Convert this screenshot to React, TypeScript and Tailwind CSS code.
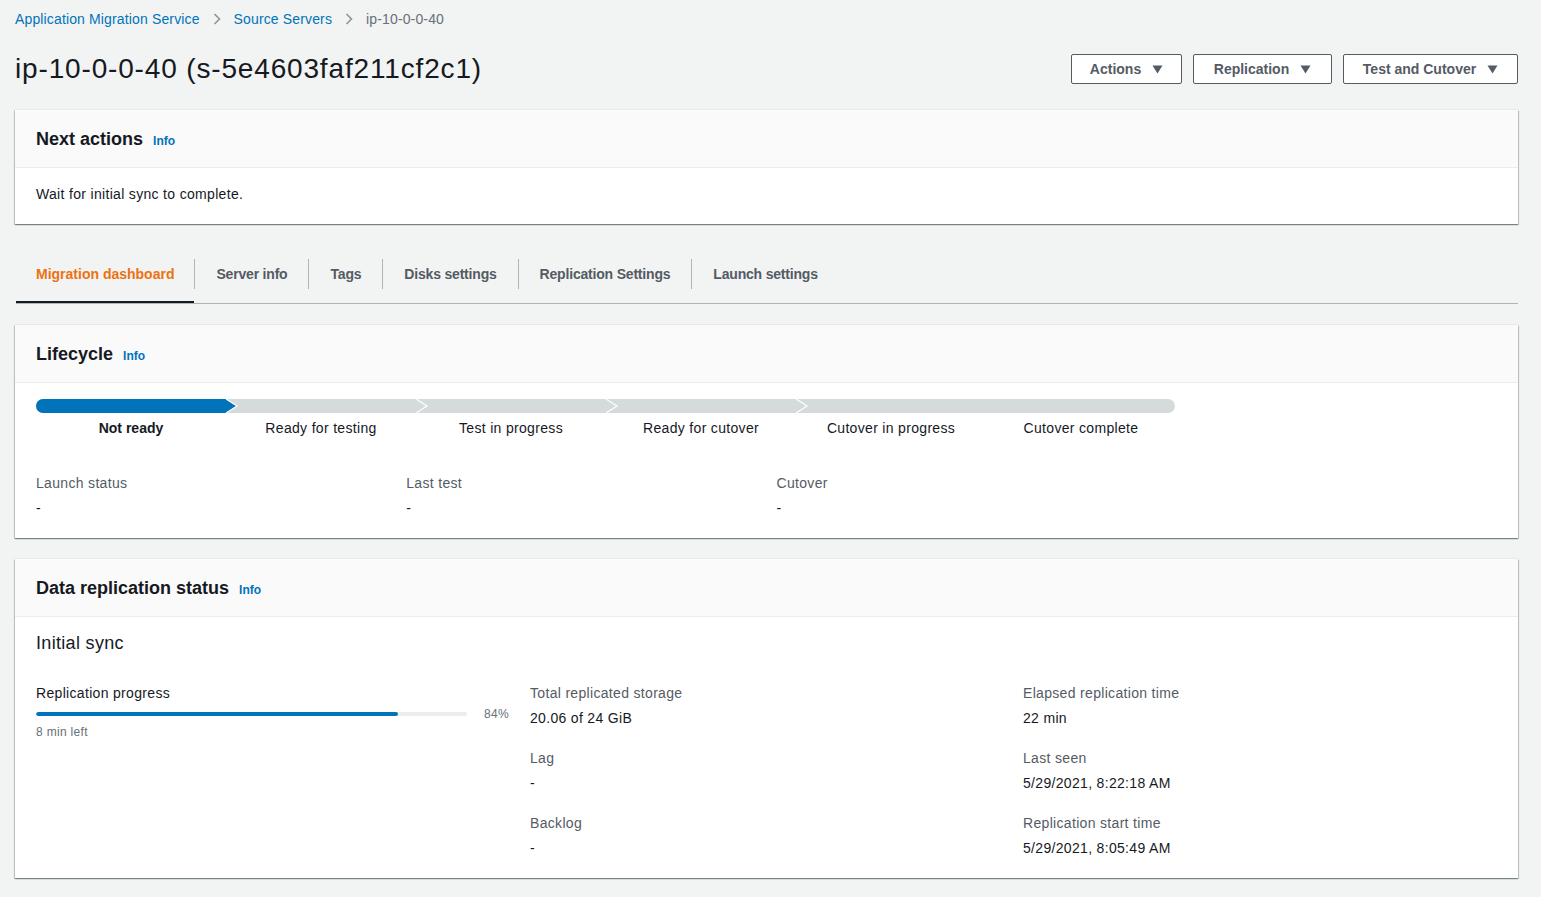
import React from "react";

const font = { fontFamily: "'Liberation Sans', Arial, sans-serif" };

function Caret() {
  return (
    <svg width="11" height="9" viewBox="0 0 11 9" className="ml-[11px]">
      <path d="M0.5 0.5 L10.5 0.5 L5.5 8.5 Z" fill="#545b64" />
    </svg>
  );
}

function Chevron() {
  return (
    <svg width="8" height="12" viewBox="0 0 8 12" className="mx-[13px]">
      <path d="M1.5 1 L6.5 6 L1.5 11" fill="none" stroke="#879596" strokeWidth="1.5" />
    </svg>
  );
}

function Btn({ label, w }: { label: string; w: string }) {
  return (
    <button className={`${w} h-[30px] flex items-center justify-center border border-[#545b64] rounded-[2px] bg-white text-[14px] font-bold tracking-normal text-[#545b64]`}>
      {label}
      <Caret />
    </button>
  );
}

function Card({ title, children }: { title: string; children: React.ReactNode }) {
  return (
    <div className="bg-white shadow-[0_0_0_0.5px_rgba(0,28,36,0.08),0_1px_1px_0_rgba(0,28,36,0.3),1px_1px_1px_0_rgba(0,28,36,0.15),-1px_1px_1px_0_rgba(0,28,36,0.15)]">
      <div className="h-[58px] bg-[#fafafa] border-b border-[#eaeded] flex items-center px-[21px] pt-[1px] tracking-normal">
        <span className="text-[18px] font-bold text-[#16191f]">{title}</span>
        <span className="ml-[10px] text-[12px] font-bold text-[#0073bb] mt-[4px]">Info</span>
      </div>
      {children}
    </div>
  );
}

function KV({ label, value }: { label: string; value: string }) {
  return (
    <div className="mb-[20px]">
      <div className="text-[14px] leading-[20px] text-[#545b64]">{label}</div>
      <div className="text-[14px] leading-[20px] text-[#16191f] mt-[5px]">{value}</div>
    </div>
  );
}

const steps = [
  "Not ready",
  "Ready for testing",
  "Test in progress",
  "Ready for cutover",
  "Cutover in progress",
  "Cutover complete",
];

function Stepper() {
  const seg = 190;
  const w = seg * 6;
  return (
    <div className="w-[1140px]">
      <svg width={w} height="14" viewBox={`0 0 ${w} 14`} className="block">
        <rect x="0" y="0" width={w - 1} height="14" rx="7" fill="#d5dbdb" />
        <path d={`M7 0 L${seg} 0 L${seg + 11} 7 L${seg} 14 L7 14 A7 7 0 0 1 7 0 Z`} fill="#0073bb" />
        {[2, 3, 4, 5].map((i) => (
          <path
            key={i}
            d={`M${seg * (i - 1) + 0} 0 L${seg * (i - 1) + 11} 7 L${seg * (i - 1)} 14`}
            fill="none"
            stroke="#ffffff"
            strokeWidth="1.2"
          />
        ))}
      </svg>
      <div className="flex mt-[5px]">
        {steps.map((s, i) => (
          <div
            key={s}
            className={`w-[190px] text-center text-[14px] leading-[20px] text-[#16191f] ${i === 0 ? "font-bold tracking-normal" : ""}`}
          >
            {s}
          </div>
        ))}
      </div>
    </div>
  );
}

const tabs = ["Migration dashboard", "Server info", "Tags", "Disks settings", "Replication Settings", "Launch settings"];

export default function App() {
  return (
    <div style={font} className="min-h-[897px] bg-[#f2f3f3] pl-[15px] pr-[23px] pt-[9px] pb-[20px] text-[#16191f] tracking-[0.02em]">
      {/* Breadcrumb */}
      <div className="flex items-center h-[20px] text-[14px] tracking-[0.01em]">
        <span className="text-[#0073bb]">Application Migration Service</span>
        <Chevron />
        <span className="text-[#0073bb]">Source Servers</span>
        <Chevron />
        <span className="text-[#687078]">ip-10-0-0-40</span>
      </div>

      {/* Title row */}
      <div className="flex items-center justify-between mt-[22px] h-[36px]">
        <h1 className="text-[28px] leading-[36px] font-normal text-[#16191f] tracking-[0.03em]">ip-10-0-0-40 (s-5e4603faf211cf2c1)</h1>
        <div className="flex gap-[11px]">
          <Btn label="Actions" w="w-[111px]" />
          <Btn label="Replication" w="w-[139px]" />
          <Btn label="Test and Cutover" w="w-[175px]" />
        </div>
      </div>

      {/* Next actions */}
      <div className="mt-[23px]">
        <Card title="Next actions">
          <div className="px-[21px] pt-[16px] pb-[20px] text-[14px] leading-[20px]">Wait for initial sync to complete.</div>
        </Card>
      </div>

      {/* Tabs */}
      <div className="mt-[35px] ml-[1px] flex items-start border-b border-[#aab7b8] tracking-[-0.012em]">
        {tabs.map((t, i) => (
          <React.Fragment key={t}>
            {i > 0 && <div className="w-px h-[30px] bg-[#aab7b8]" />}
            <div className={`flex flex-col ${i === 0 ? "px-[20px] tracking-normal" : "px-[21px]"} relative`}>
              <div
                className={`h-[30px] flex items-center text-[14px] font-bold ${i === 0 ? "text-[#ec7211]" : "text-[#545b64]"}`}
              >
                {t}
              </div>
              <div className="h-[14px]" />
              {i === 0 && <div className="absolute left-0 right-0 bottom-0 h-[2px] bg-[#16191f]" />}
            </div>
          </React.Fragment>
        ))}
      </div>

      {/* Lifecycle */}
      <div className="mt-[21px]">
        <Card title="Lifecycle">
          <div className="px-[21px] pt-[16px] pb-[20px]">
            <Stepper />
            <div className="grid grid-cols-4 mt-[35px] w-[1481px]">
              <div className="flex flex-col">
                <div className="text-[14px] leading-[20px] text-[#545b64]">Launch status</div>
                <div className="text-[14px] leading-[20px] mt-[5px]">-</div>
              </div>
              <div className="flex flex-col">
                <div className="text-[14px] leading-[20px] text-[#545b64]">Last test</div>
                <div className="text-[14px] leading-[20px] mt-[5px]">-</div>
              </div>
              <div className="flex flex-col">
                <div className="text-[14px] leading-[20px] text-[#545b64]">Cutover</div>
                <div className="text-[14px] leading-[20px] mt-[5px]">-</div>
              </div>
            </div>
          </div>
        </Card>
      </div>

      {/* Data replication status */}
      <div className="mt-[21px]">
        <Card title="Data replication status">
          <div className="pl-[21px] pt-[14px]">
            <div className="text-[18px] leading-[24px] text-[#16191f]">Initial sync</div>
            <div className="grid grid-cols-[494px_493px_1fr] mt-[28px]">
              <div className="pr-[20px]">
                <div className="text-[14px] leading-[20px] text-[#16191f]">Replication progress</div>
                <div className="flex items-center mt-[3px] h-[16px]">
                  <div className="w-[431px] h-[4px] bg-[#eaeded] rounded-[2px] overflow-hidden">
                    <div className="h-full bg-[#0073bb] rounded-[2px]" style={{ width: "84%" }} />
                  </div>
                  <span className="ml-[17px] text-[12px] leading-[16px] text-[#687078]">84%</span>
                </div>
                <div className="text-[12px] leading-[16px] text-[#687078] mt-[2px]">8 min left</div>
              </div>
              <div>
                <KV label="Total replicated storage" value="20.06 of 24 GiB" />
                <KV label="Lag" value="-" />
                <KV label="Backlog" value="-" />
              </div>
              <div>
                <KV label="Elapsed replication time" value="22 min" />
                <KV label="Last seen" value="5/29/2021, 8:22:18 AM" />
                <KV label="Replication start time" value="5/29/2021, 8:05:49 AM" />
              </div>
            </div>
          </div>
        </Card>
      </div>
    </div>
  );
}
